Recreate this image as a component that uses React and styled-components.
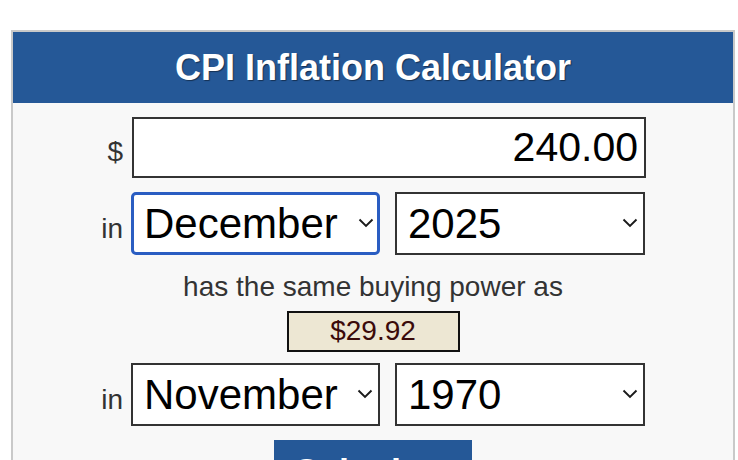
import React from 'react'
import styled, { createGlobalStyle } from 'styled-components'

const GlobalStyle = createGlobalStyle`
  html, body {
    margin: 0;
    padding: 0;
    background: #ffffff;
    overflow: hidden;
  }
  body {
    font-family: "Liberation Sans", Arial, Helvetica, sans-serif;
  }
`

const Page = styled.div`
  padding: 30px 3px 0 11px;
`

const Card = styled.section`
  border: 2px solid #c9c9c9;
  border-bottom: none;
  background: #f8f8f8;
  min-height: 440px;
`

const Header = styled.h1`
  margin: 0;
  height: 71px;
  display: flex;
  align-items: center;
  justify-content: center;
  background: #255897;
  color: #ffffff;
  font-size: 36px;
  font-weight: 700;
  text-shadow: 1px 1px 1px rgba(0, 0, 0, 0.45);
`

const Form = styled.form`
  display: flex;
  flex-direction: column;
  align-items: center;
  padding-top: 14px;
`

const Row = styled.div`
  display: grid;
  grid-template-columns: 22px 514px;
  column-gap: 8px;
  align-items: baseline;
  margin-top: ${(p) => p.$mt || 0}px;
`

const Label = styled.label`
  text-align: right;
  font-size: 28px;
  color: #333333;
  white-space: nowrap;
`

const AmountInput = styled.input`
  box-sizing: border-box;
  width: 514px;
  height: 61px;
  margin-left: 1px;
  border: 2px solid #333333;
  background: #ffffff;
  padding: 0 6px;
  text-align: right;
  font-family: inherit;
  font-size: 41px;
  color: #000000;
  outline: none;
`

const Selects = styled.div`
  display: grid;
  grid-template-columns: 249px 250px;
  column-gap: 15px;
`

const SelectWrap = styled.div`
  position: relative;
`

const Select = styled.select`
  appearance: none;
  -webkit-appearance: none;
  box-sizing: border-box;
  width: 100%;
  height: 63px;
  margin: 0;
  padding: 0 30px 0 ${(p) => (p.$focused ? 10 : 11)}px;
  border: ${(p) => (p.$focused ? '3px solid #2a5dc2' : '2px solid #333333')};
  border-radius: ${(p) => (p.$focused ? '5px' : '0')};
  background: #ffffff;
  font-family: inherit;
  font-size: 42px;
  color: #000000;
  outline: none;
`

const Chevron = styled.svg`
  position: absolute;
  top: 26px;
  right: ${(p) => (p.$tight ? 6 : 7)}px;
  width: 16px;
  height: 10px;
  pointer-events: none;
`

const Equals = styled.p`
  margin: 16px 0 0;
  font-size: 28px;
  line-height: 32px;
  color: #333333;
`

const Result = styled.div`
  box-sizing: border-box;
  width: 173px;
  height: 41px;
  margin-top: 8px;
  border: 2px solid #111111;
  background: #ede7d3;
  color: #3b0a0a;
  font-size: 28px;
  line-height: 35px;
  text-align: center;
`

const Button = styled.button`
  box-sizing: border-box;
  margin-top: 14px;
  width: 198px;
  height: 60px;
  padding: 6px 0 0;
  border: none;
  background: #255897;
  color: #ffffff;
  font-family: inherit;
  font-size: 36px;
  font-weight: 700;
`

const months = [
  'January', 'February', 'March', 'April', 'May', 'June', 'July',
  'August', 'September', 'October', 'November', 'December',
]

const years = Array.from({ length: 2025 - 1913 + 1 }, (_, i) => String(2025 - i))

const ChevronIcon = ({ tight }) => (
  <Chevron $tight={tight} viewBox="0 0 16 10">
    <path d="M1.5 1.5 L8 8 L14.5 1.5" fill="none" stroke="#1a1a1a" strokeWidth="1.9" />
  </Chevron>
)

const DateRow = ({ month, year, focused, mt }) => (
  <Row $mt={mt}>
    <Label>in</Label>
    <Selects>
      <SelectWrap>
        <Select $focused={focused} defaultValue={month}>
          {months.map((m) => (
            <option key={m}>{m}</option>
          ))}
        </Select>
        <ChevronIcon tight={focused} />
      </SelectWrap>
      <SelectWrap>
        <Select defaultValue={year}>
          {years.map((y) => (
            <option key={y}>{y}</option>
          ))}
        </Select>
        <ChevronIcon />
      </SelectWrap>
    </Selects>
  </Row>
)

const App = () => {
  return (
    <Page>
      <GlobalStyle />
      <Card>
        <Header>CPI Inflation Calculator</Header>
        <Form onSubmit={(e) => e.preventDefault()}>
          <Row>
            <Label>$</Label>
            <AmountInput defaultValue="240.00" />
          </Row>
          <DateRow month="December" year="2025" focused mt={14} />
          <Equals>has the same buying power as</Equals>
          <Result>$29.92</Result>
          <DateRow month="November" year="1970" mt={11} />
          <Button type="submit">Calculate</Button>
        </Form>
      </Card>
    </Page>
  )
}

export default App
